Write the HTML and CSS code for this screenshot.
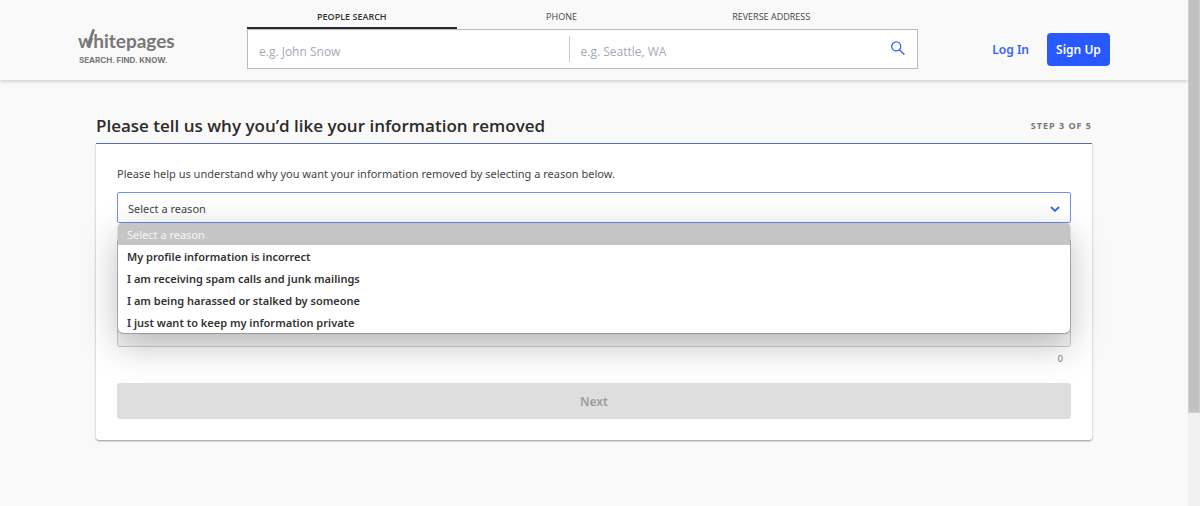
FILE: index.html
```html
<!DOCTYPE html>
<html lang="en">
<head>
<meta charset="utf-8">
<title>Whitepages</title>
<link rel="stylesheet" href="styles.css">
</head>
<body>
<div class="page">
  <header class="header">
    <div class="header-inner">
      <a class="logo" href="#">
        <span class="logo-name">whitepages</span>
        <svg class="logo-stroke" viewBox="0 0 20 22" width="20" height="22" aria-hidden="true"><path d="M10 17.5 15.4 2.4" fill="none" stroke="#777" stroke-width="2.8" stroke-linecap="round"/></svg>
        <span class="logo-tag">SEARCH. FIND. KNOW.</span>
      </a>
      <div class="search">
        <nav class="tabs">
          <a class="tab tab-active" href="#">PEOPLE SEARCH</a>
          <a class="tab" href="#">PHONE</a>
          <a class="tab" href="#">REVERSE ADDRESS</a>
        </nav>
        <form class="search-box">
          <input class="search-input" type="text" aria-label="Name" placeholder="e.g. John Snow">
          <input class="search-input search-place" type="text" aria-label="Location" placeholder="e.g. Seattle, WA">
          <button class="search-button" type="button" aria-label="Search">
            <svg viewBox="0 0 16 16" width="16" height="16" aria-hidden="true"><g fill="none" stroke="#3565fb" stroke-width="1.4" stroke-linecap="round"><circle cx="6.2" cy="6.4" r="4.5"/><path d="M9.5 9.8 14 14.2"/></g></svg>
          </button>
        </form>
      </div>
      <div class="account">
        <a class="login" href="#">Log In</a>
        <button class="signup" type="button">Sign Up</button>
      </div>
    </div>
  </header>
  <main class="main">
    <div class="title-row">
      <h1 class="title">Please tell us why you’d like your information removed</h1>
      <span class="step">STEP 3 OF 5</span>
    </div>
    <form class="card">
      <label class="prompt" for="reason">Please help us understand why you want your information removed by selecting a reason below.</label>
      <div class="reason">
        <select class="reason-select" id="reason"><option>Select a reason</option></select>
        <svg class="chevron" viewBox="0 0 10 6" width="10" height="6" aria-hidden="true"><path d="M1 1 5 4.8 9 1" fill="none" stroke="#3060f5" stroke-width="1.8"/></svg>
        <ul class="menu" role="listbox" aria-label="Reasons">
          <li class="option option-current" role="option" aria-selected="true">Select a reason</li>
          <li class="option" role="option">My profile information is incorrect</li>
          <li class="option" role="option">I am receiving spam calls and junk mailings</li>
          <li class="option" role="option">I am being harassed or stalked by someone</li>
          <li class="option" role="option">I just want to keep my information private</li>
        </ul>
      </div>
      <textarea class="details" aria-label="Details" disabled></textarea>
      <div class="count">0</div>
      <button class="next" type="button" disabled>Next</button>
    </form>
  </main>
</div>
<div class="scroll-track" aria-hidden="true"><div class="scroll-thumb"></div></div>
</body>
</html>
```
FILE: styles.css
```css
* { box-sizing: border-box; }

body {
  margin: 0;
  min-height: 100vh;
  display: flex;
  background: #f9f9f9;
  color: #444;
  font: 12px/20px "Open Sans", sans-serif;
}

input, select, textarea, button { font: inherit; margin: 0; }
a { color: inherit; text-decoration: none; }

.page { flex: 1; min-width: 0; }

.header {
  background: #f9f9f9;
  box-shadow: 0 1px 4px rgba(0, 0, 0, 0.22);
}

.header-inner {
  max-width: 1032px;
  min-height: 80px;
  margin: 0 auto;
  display: flex;
}

.logo {
  position: relative;
  width: 169px;
  padding-top: 29px;
  display: flex;
  flex-direction: column;
  color: #777;
}

.logo-name {
  font: 700 19px/24px Lato, sans-serif;
}

.logo-stroke { position: absolute; left: 0; top: 28px; }

.logo-tag {
  padding-left: 1px;
  font: 700 8px/14px Inter, sans-serif;
}

.search { flex: 1; }

.tabs { display: grid; grid-template-columns: repeat(3, 1fr); margin-right: 42px; }

.tab {
  height: 29px;
  padding-top: 7px;
  font-size: 9px;
  text-align: center;
  color: #444;
}

.tab-active {
  font-weight: 600;
  color: #333;
  border-bottom: 2px solid #2b2b33;
}

.search-box {
  display: flex;
  align-items: center;
  height: 40px;
  background: #fff;
  border: 1px solid #bbb;
}

.search-input {
  flex: 1;
  min-width: 0;
  height: 26px;
  padding: 4px 11px 0;
  border: 0;
  background: none;
  outline: 0;
}

.search-place { border-left: 1px solid #ccc; }
.search-input::placeholder { color: #a3a9b5; opacity: 1; }

.search-button {
  width: 16px;
  height: 32px;
  margin-right: 11px;
  padding: 4px 0 0;
  border: 0;
  background: none;
}

.account {
  display: flex;
  align-items: center;
  width: 192px;
  padding-top: 18px;
  justify-content: flex-end;
  gap: 18px;
  font-family: "Noto Sans", sans-serif;
  font-weight: 600;
}

.login { padding-top: 2px; color: #3565f5; }

.signup {
  width: 63px;
  height: 33px;
  padding: 2px 0 0;
  border: 0;
  border-radius: 4px;
  background: #2858ff;
  color: #fff;
}

.main { max-width: 996px; margin: 0 auto; padding-top: 34px; }

.title-row {
  display: flex;
  justify-content: space-between;
  align-items: center;
  padding-bottom: 5px;
}

.title {
  margin: 0;
  font-size: 17px;
  line-height: 24px;
  font-weight: 600;
  color: #2b2b2b;
}

.step {
  font-size: 9px;
  font-weight: 700;
  letter-spacing: 1px;
  color: #777;
}

.card {
  display: flex;
  flex-direction: column;
  padding: 20px 21px 21px;
  font-family: "Noto Sans", sans-serif;
  font-size: 11px;
  background: #fff;
  border-top: 1px solid #5f70a8;
  border-radius: 0 0 3px 3px;
  box-shadow: 0 1px 2px rgba(0, 0, 0, 0.4);
}

.prompt { margin-bottom: 8px; }

.reason { position: relative; display: flex; }

.reason-select {
  flex: 1;
  height: 31px;
  padding: 2px 10px 0;
  appearance: none;
  border: 1px solid #6f92fa;
  border-radius: 2px;
  background: #fff;
  color: #444;
  outline: 0;
}

.chevron { position: absolute; right: 11px; top: 14px; }

.menu {
  position: absolute;
  z-index: 1;
  top: 31px;
  left: 1px;
  right: 1px;
  margin: 0;
  padding: 0;
  list-style: none;
  overflow: hidden;
  background: #fff;
  border-radius: 5px;
  box-shadow: 0 0 1px rgba(0, 0, 0, 0.7), 0 1px 1px rgba(0, 0, 0, 0.2), 0 12px 36px rgba(0, 0, 0, 0.26);
}

.option {
  height: 22px;
  padding: 2px 9px 0;
  font-weight: 600;
  color: #333;
}

.option-current {
  font-weight: 400;
  background: #c5c5c5;
  color: #f5f5f5;
}

.details {
  height: 109px;
  margin-top: 15px;
  resize: none;
  border: 1px solid #ccc;
  border-radius: 3px;
  background: #f5f5f5;
}

.count {
  padding: 2px 8px 0 0;
  height: 36px;
  font-size: 9px;
  text-align: right;
  color: #777;
}

.next {
  height: 36px;
  padding-top: 2px;
  border: 0;
  border-radius: 3px;
  background: #dedede;
  color: #9c9c9c;
  font-size: 12px;
  font-weight: 600;
}

.scroll-track { width: 12px; background: #f0f0f0; }

.scroll-thumb {
  height: 82vh;
  max-height: calc(100vh - 93px);
  background: #c1c1c1;
  border: 1px solid #cfcfcf;
  border-top: 0;
}
```
